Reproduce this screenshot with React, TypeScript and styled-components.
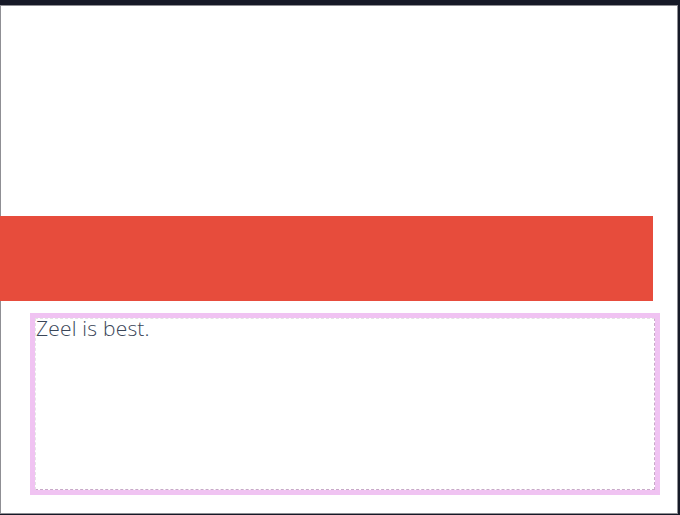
import styled, { createGlobalStyle } from 'styled-components';

const GlobalStyle = createGlobalStyle`
  html, body {
    margin: 0;
    padding: 0;
    background: #161927;
  }
  body {
    font-family: 'Open Sans', 'Liberation Sans', sans-serif;
  }
`;

const Frame = styled.div`
  margin-top: 5px;
  width: 678px;
  height: 509px;
  box-sizing: border-box;
  border: 1px solid #8f8f94;
  background: #ffffff;
  padding-top: 210px;
`;

const Banner = styled.div`
  margin-left: -1px;
  width: 653px;
  height: 85px;
  background: #e74c3c;
`;

const Note = styled.div`
  margin: 12px 0 0 29px;
  width: 630px;
  height: 182px;
  box-sizing: border-box;
  border: 5px solid #f0c3f2;
`;

const NoteInner = styled.div`
  height: 100%;
  box-sizing: border-box;
  border: 1px dashed #c9a9c9;
  border-top-color: #e4e4e4;
  border-left-color: #e4e4e4;
  font-size: 21px;
  font-weight: 300;
  letter-spacing: 0.2px;
  line-height: 18px;
  color: #3a4658;
`;

export default function App() {
  return (
    <>
      <GlobalStyle />
      <Frame>
        <Banner />
        <Note>
          <NoteInner>Zeel is best.</NoteInner>
        </Note>
      </Frame>
    </>
  );
}
